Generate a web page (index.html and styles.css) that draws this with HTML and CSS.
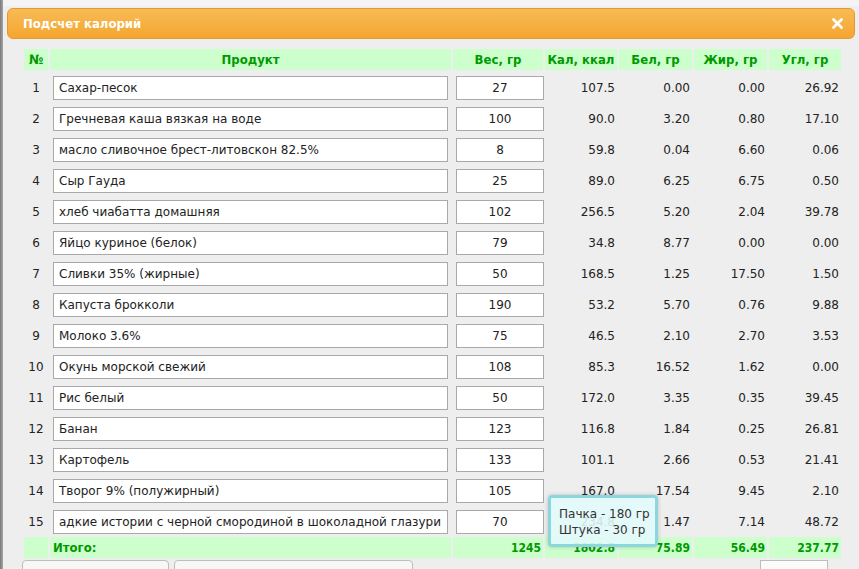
FILE: index.html
```html
<!DOCTYPE html>
<html lang="ru">
<head>
<meta charset="utf-8">
<title>Подсчет калорий</title>
<link rel="stylesheet" href="styles.css">
</head>
<body>
<div class="edge"></div>
<div class="dialog">
  <div class="titlebar">
    <span class="title">Подсчет калорий</span>
    <svg class="close" width="11" height="11" viewBox="0 0 11 11"><path d="M1.5 1.5 L9.5 9.5 M9.5 1.5 L1.5 9.5" stroke="#fff" stroke-width="2.6" stroke-linecap="round"/></svg>
  </div>
  <div class="table">
    <div class="row head">
      <div class="hc">№</div><div class="hc">Продукт</div><div class="hc">Вес, гр</div><div class="hc">Кал, ккал</div><div class="hc">Бел, гр</div><div class="hc">Жир, гр</div><div class="hc">Угл, гр</div>
    </div>
    <div class="row"><div class="n">1</div><div class="in">Сахар-песок</div><div class="in w">27</div><div class="v">107.5</div><div class="v">0.00</div><div class="v">0.00</div><div class="v">26.92</div></div>
    <div class="row"><div class="n">2</div><div class="in">Гречневая каша вязкая на воде</div><div class="in w">100</div><div class="v">90.0</div><div class="v">3.20</div><div class="v">0.80</div><div class="v">17.10</div></div>
    <div class="row"><div class="n">3</div><div class="in">масло сливочное брест-литовскон 82.5%</div><div class="in w">8</div><div class="v">59.8</div><div class="v">0.04</div><div class="v">6.60</div><div class="v">0.06</div></div>
    <div class="row"><div class="n">4</div><div class="in">Сыр Гауда</div><div class="in w">25</div><div class="v">89.0</div><div class="v">6.25</div><div class="v">6.75</div><div class="v">0.50</div></div>
    <div class="row"><div class="n">5</div><div class="in">хлеб чиабатта домашняя</div><div class="in w">102</div><div class="v">256.5</div><div class="v">5.20</div><div class="v">2.04</div><div class="v">39.78</div></div>
    <div class="row"><div class="n">6</div><div class="in">Яйцо куриное (белок)</div><div class="in w">79</div><div class="v">34.8</div><div class="v">8.77</div><div class="v">0.00</div><div class="v">0.00</div></div>
    <div class="row"><div class="n">7</div><div class="in">Сливки 35% (жирные)</div><div class="in w">50</div><div class="v">168.5</div><div class="v">1.25</div><div class="v">17.50</div><div class="v">1.50</div></div>
    <div class="row"><div class="n">8</div><div class="in">Капуста брокколи</div><div class="in w">190</div><div class="v">53.2</div><div class="v">5.70</div><div class="v">0.76</div><div class="v">9.88</div></div>
    <div class="row"><div class="n">9</div><div class="in">Молоко 3.6%</div><div class="in w">75</div><div class="v">46.5</div><div class="v">2.10</div><div class="v">2.70</div><div class="v">3.53</div></div>
    <div class="row"><div class="n">10</div><div class="in">Окунь морской свежий</div><div class="in w">108</div><div class="v">85.3</div><div class="v">16.52</div><div class="v">1.62</div><div class="v">0.00</div></div>
    <div class="row"><div class="n">11</div><div class="in">Рис белый</div><div class="in w">50</div><div class="v">172.0</div><div class="v">3.35</div><div class="v">0.35</div><div class="v">39.45</div></div>
    <div class="row"><div class="n">12</div><div class="in">Банан</div><div class="in w">123</div><div class="v">116.8</div><div class="v">1.84</div><div class="v">0.25</div><div class="v">26.81</div></div>
    <div class="row"><div class="n">13</div><div class="in">Картофель</div><div class="in w">133</div><div class="v">101.1</div><div class="v">2.66</div><div class="v">0.53</div><div class="v">21.41</div></div>
    <div class="row"><div class="n">14</div><div class="in">Творог 9% (полужирный)</div><div class="in w">105</div><div class="v">167.0</div><div class="v">17.54</div><div class="v">9.45</div><div class="v">2.10</div></div>
    <div class="row"><div class="n">15</div><div class="in">адкие истории с черной смородиной в шоколадной глазури</div><div class="in w">70</div><div class="v">234.8</div><div class="v">1.47</div><div class="v">7.14</div><div class="v">48.72</div></div>
    <div class="row total">
      <div class="tc"></div><div class="tc label">Итого:</div><div class="tc num">1245</div><div class="tc num">1802.8</div><div class="tc num">75.89</div><div class="tc num">56.49</div><div class="tc num">237.77</div>
    </div>
    <div class="tooltip">Пачка - 180 гр<br>Штука - 30 гр</div>
  </div>
  <div class="buttons">
    <div class="btn b1"></div>
    <div class="btn b2"></div>
    <div class="spacer"></div>
    <div class="btn b3"></div>
  </div>
</div>
</body>
</html>
```

FILE: styles.css
```css
html, body {
  margin: 0;
  padding: 0;
}
body {
  width: 859px;
  height: 569px;
  overflow: hidden;
  background: #eeeeee;
  font-family: "DejaVu Sans", Verdana, sans-serif;
  font-size: 12px;
  color: #222;
  display: flex;
}
.edge {
  width: 3px;
  flex: none;
  background: linear-gradient(to right, #7a7a7a, #a5a5a5);
}
.dialog {
  flex: 1;
  padding: 8px 0 0 4px;
  background: linear-gradient(to bottom, #f4f4f4 0, #f4f4f4 6px, #eeeeee 6px);
}
.titlebar {
  height: 29px;
  width: 846px;
  box-sizing: content-box;
  border: 1px solid #e8982a;
  border-radius: 6px;
  background: linear-gradient(to bottom, #f8bb55, #f4a630);
  display: flex;
  align-items: center;
  justify-content: space-between;
  padding: 0;
}
.title {
  color: #fff;
  font-family: Tahoma, "DejaVu Sans Condensed", "DejaVu Sans", sans-serif;
  font-weight: bold;
  font-size: 13px;
  margin-left: 15px;
}
.close {
  margin-right: 11px;
}
.table {
  position: relative;
  margin: 10px 0 0 17px;
  width: 817px;
}
.row {
  display: grid;
  grid-template-columns: 24px 401px 90px 72px 73px 73px 72px;
  column-gap: 2px;
  height: 31px;
  align-items: center;
}
.row.head {
  height: 21px;
  margin-bottom: 2px;
  align-items: stretch;
}
.hc {
  background: #ccffcc;
  color: #009900;
  font-family: "DejaVu Sans Condensed", "DejaVu Sans", sans-serif;
  font-weight: bold;
  font-size: 13px;
  display: flex;
  align-items: center;
  justify-content: center;
}
.n {
  text-align: center;
}
.in {
  height: 22px;
  background: #fff;
  border: 1px solid #a9a9a9;
  margin: 0 3px;
  display: flex;
  align-items: center;
  padding-left: 5px;
  white-space: nowrap;
  overflow: hidden;
}
.in.w {
  justify-content: center;
  padding-left: 0;
  margin: 0 -1px 0 3px;
}
.v {
  text-align: right;
  padding-right: 2px;
}
.row.total {
  height: 21px;
  align-items: stretch;
}
.tc {
  background: #ccffcc;
  color: #009900;
  font-family: "DejaVu Sans Condensed", "DejaVu Sans", sans-serif;
  font-weight: bold;
  font-size: 12px;
  display: flex;
  align-items: center;
}
.tc.label {
  padding-left: 3px;
  font-size: 13px;
}
.tc.num {
  justify-content: flex-end;
  padding-right: 2px;
}
.tooltip {
  position: absolute;
  left: 524px;
  top: 446px;
  width: 96px;
  height: 44px;
  padding: 2px 0 0 8px;
  border: 3px solid #8dd6de;
  border-radius: 4px;
  background: rgba(226, 251, 251, 0.88);
  box-shadow: 0 0 4px rgba(0, 0, 0, 0.2);
  color: #333;
  font-size: 12px;
  line-height: 16px;
  display: flex;
  align-items: center;
}
.buttons {
  display: flex;
  margin: 2px 0 0 15px;
  gap: 5px;
}
.btn {
  height: 24px;
  border: 1px solid #bdbdbd;
  border-radius: 4px;
  background: #f7f7f7;
}
.b1 { width: 145px; }
.b2 { width: 237px; }
.spacer { flex: 0 0 337px; }
.b3 { width: 66px; border-radius: 0; background: #fbfbfb; }
```
